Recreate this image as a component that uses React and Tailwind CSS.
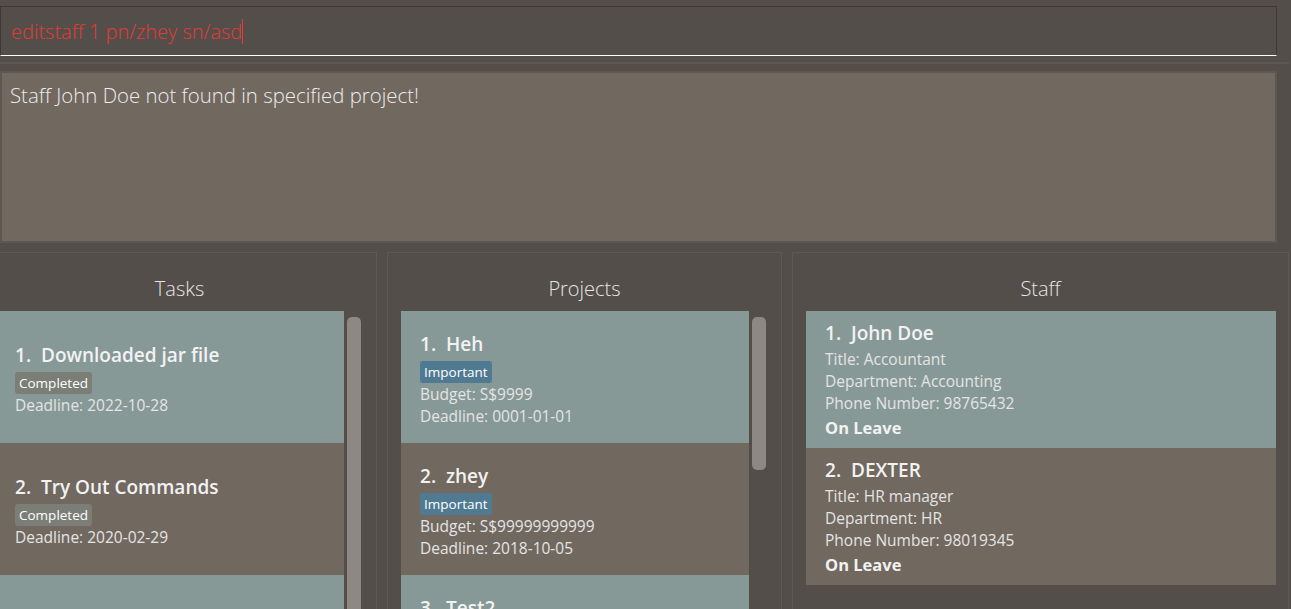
import React from 'react';

const tasks = [
  { title: 'Downloaded jar file', deadline: '2022-10-28' },
  { title: 'Try Out Commands', deadline: '2020-02-29' },
  { title: 'Test Task', deadline: '2021-01-01' },
];

const projects = [
  { title: 'Heh', budget: 'S$9999', deadline: '0001-01-01' },
  { title: 'zhey', budget: 'S$99999999999', deadline: '2018-10-05' },
  { title: 'Test2', budget: 'S$100', deadline: '2022-01-01' },
];

const staff = [
  { name: 'John Doe', title: 'Accountant', dept: 'Accounting', phone: '98765432' },
  { name: 'DEXTER', title: 'HR manager', dept: 'HR', phone: '98019345' },
];

const cardBg = (i) => (i % 2 === 0 ? 'bg-[#879997]' : 'bg-[#716860]');

function Panel({ title, children, className }) {
  return (
    <div className={`flex flex-col shrink-0 border border-[#5f5955] ${className}`}>
      <div className="h-[58px] flex items-end justify-center pb-[7px] text-[20px] font-light text-[#e6e6e6]">
        {title}
      </div>
      <div className="flex flex-1 min-h-0 pl-[13px]">{children}</div>
    </div>
  );
}

function Scrollbar({ h }) {
  return (
    <div className="w-[14px] ml-[3px] pt-[6px] shrink-0">
      <div className={`bg-[#8e8884] rounded-[5px] ${h}`} />
    </div>
  );
}

function Tag({ label, color }) {
  return (
    <span className={`self-start text-[13.5px] leading-[22px] px-[4px] rounded-[3px] text-white ${color}`}>
      {label}
    </span>
  );
}

const titleCls = 'text-[19px] font-semibold leading-[26px] text-[#f2f2f2]';
const lineCls = 'text-[15.5px] leading-[22px] text-[#e4e4e4]';

export default function App() {
  return (
    <div
      className="w-[1291px] h-[609px] overflow-hidden bg-[#534e4a] text-[#eeeeee]"
      style={{ fontFamily: '"Open Sans", "Noto Sans", sans-serif' }}
    >
      {/* command box */}
      <div className="pt-[6px] pr-[14px]">
        <div className="h-[50px] border border-[#3f3835] border-b-white flex items-center pl-[10px] pt-[1px] text-[20px] font-light text-[#e53a35]">
          <span>editstaff 1 pn/zhey sn/asd</span>
          <span className="w-px h-[25px] bg-[#e53a35]" />
        </div>
      </div>

      <div className="h-[2px] bg-[#5d5854] mt-[6px] mr-[2px]" />

      {/* result box */}
      <div className="mt-[7px] mr-[14px] h-[172px] bg-[#716860] border-2 border-[#5e5752] px-[8px] pt-[7px] text-[20.4px] font-light text-[#ececec]">
        Staff John Doe not found in specified project!
      </div>

      {/* panels */}
      <div className="flex gap-[10px] ml-[-18px] mt-[9px] h-[400px]">
        <Panel title="Tasks" className="w-[395px]">
          <div className="w-[348px] flex flex-col shrink-0">
            {tasks.map((t, i) => (
              <div key={i} className={`h-[132px] shrink-0 flex flex-col justify-center pl-[19px] pt-[4px] ${cardBg(i)}`}>
                <div className={titleCls}>
                  {i + 1}.&nbsp; {t.title}
                </div>
                <div className="mt-[4px] flex flex-col">
                  <Tag label="Completed" color="bg-[#7a7e76]" />
                </div>
                <div className={lineCls}>Deadline: {t.deadline}</div>
              </div>
            ))}
          </div>
          <Scrollbar h="h-[400px]" />
        </Panel>

        <Panel title="Projects" className="w-[395px]">
          <div className="w-[348px] flex flex-col shrink-0">
            {projects.map((p, i) => (
              <div key={i} className={`h-[132px] shrink-0 flex flex-col justify-center pl-[19px] pt-[4px] ${cardBg(i)}`}>
                <div className={titleCls}>
                  {i + 1}.&nbsp; {p.title}
                </div>
                <div className="mt-[4px] flex flex-col">
                  <Tag label="Important" color="bg-[#507a92]" />
                </div>
                <div className={lineCls}>Budget: {p.budget}</div>
                <div className={lineCls}>Deadline: {p.deadline}</div>
              </div>
            ))}
          </div>
          <Scrollbar h="h-[153px]" />
        </Panel>

        <Panel title="Staff" className="w-[497px]">
          <div className="w-[470px] flex flex-col shrink-0">
            {staff.map((s, i) => (
              <div key={i} className={`h-[137px] shrink-0 flex flex-col pl-[19px] pt-[9px] ${cardBg(i)}`}>
                <div className={titleCls}>
                  {i + 1}.&nbsp; {s.name}
                </div>
                <div className={`mt-[2px] ${lineCls}`}>Title: {s.title}</div>
                <div className={lineCls}>Department: {s.dept}</div>
                <div className={lineCls}>Phone Number: {s.phone}</div>
                <div className="mt-[3px] text-[16.5px] font-bold leading-[22px] text-[#f2f2f2]">On Leave</div>
              </div>
            ))}
          </div>
        </Panel>
      </div>
    </div>
  );
}
